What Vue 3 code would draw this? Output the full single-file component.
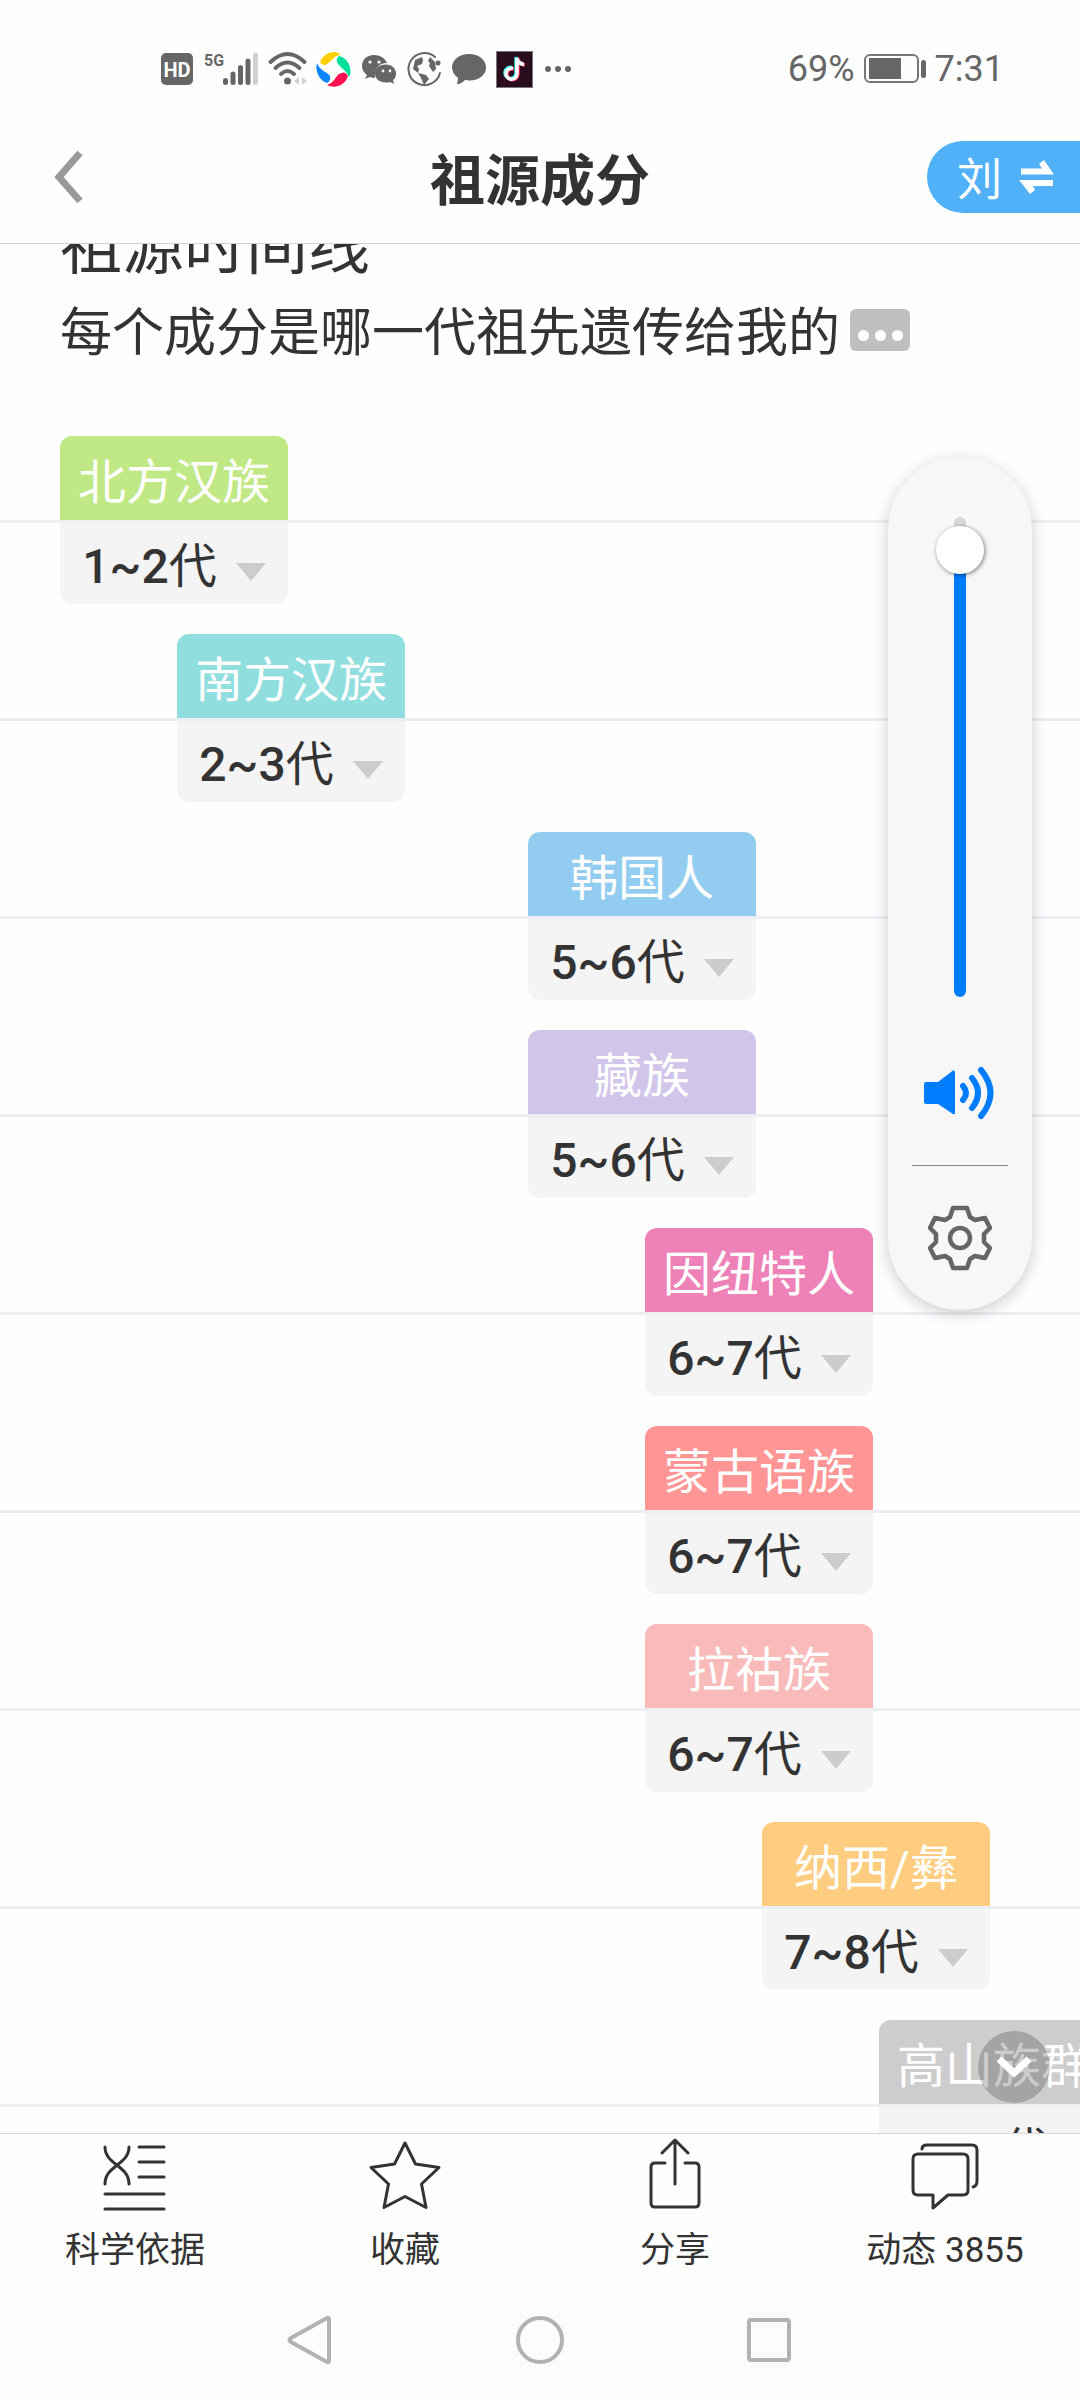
<script setup>
import { ref } from 'vue'

const volume = ref(98)
const surname = ref('刘')

const STEP = 117
const timeline = [
  { name: '北方汉族', range: '1~2', slot: 0, color: '#c0e885' },
  { name: '南方汉族', range: '2~3', slot: 1, color: '#90dede' },
  { name: '韩国人', range: '5~6', slot: 4, color: '#92cdf1' },
  { name: '藏族', range: '5~6', slot: 4, color: '#d1c5ea' },
  { name: '因纽特人', range: '6~7', slot: 5, color: '#ee81b8' },
  { name: '蒙古语族', range: '6~7', slot: 5, color: '#ff9594' },
  { name: '拉祜族', range: '6~7', slot: 5, color: '#f9bbba' },
  { name: '纳西/彝', range: '7~8', slot: 6, color: '#ffcd80' },
  { name: '高山族群', range: '8~10', slot: 7, color: '#cdcdcd' },
]
</script>

<template>
  <div class="screen">
    <div class="status">
      <div class="status-left">
        <svg width="34" height="40" viewBox="0 0 34 40">
          <rect x="1" y="4" width="32" height="32" rx="5" fill="#666" />
          <text x="17" y="28" text-anchor="middle" font-size="20" font-weight="700" fill="#fff">HD</text>
        </svg>
        <svg width="56" height="40" viewBox="0 0 56 40">
          <text x="1" y="17" font-size="16" font-weight="700" fill="#666">5G</text>
          <g stroke="#666" stroke-width="5" stroke-linecap="round">
            <path d="M22.500 31.500V33.500M30 25V33.500M37.500 18.500V33.500M45 12V33.500" />
            <path d="M52.500 6V33.500" stroke="#d0d0d0" />
          </g>
        </svg>
        <svg width="39" height="40" viewBox="0 0 39 40">
          <g fill="none" stroke="#666" stroke-width="4" stroke-linecap="round">
            <path d="M2.500 13Q19.500-3 36.500 13M7.500 19Q19.500 8 31.500 19M13 25Q19.500 19 26 25" />
          </g>
          <circle cx="19.500" cy="32" r="3.500" fill="#666" />
          <path d="M31 28v8l-5-4zM34 28v8l5-4z" fill="#d0d0d0" />
        </svg>
        <svg width="36" height="40" viewBox="0 0 36 40">
          <path d="M4 13C8 3 20 0 25 6C18 6 16 12 11 15Q7 18 4 13Z" fill="#ffd100" />
          <path d="M23 7C33 9 37 22 33 28C31 22 26 20 22 15Q19 10 23 7Z" fill="#00e09b" />
          <path d="M1 14C4 22 10 22 14 27Q15 32 11 34C2 31-1 20 1 14Z" fill="#0a84ff" />
          <path d="M11 36C18 34 19 28 23 25Q29 21 32 27C29 37 18 40 11 36Z" fill="#ff0f50" />
        </svg>
        <svg width="36" height="40" viewBox="0 0 36 40">
          <path d="M13 6C5 6 1 11 1 17c0 4 2 7 5 9l-2 4 5-2q3 1 5 1C13 20 18 14 26 14 24 9 19 6 13 6Z" fill="#666" />
          <path d="M25 15.500c-7 0-11 4-11 9s4 9 11 9q2 0 4-.5l4 2-1-4c2-1 3-4 3-6.500 0-5-4-9-10-9Z" fill="#666" />
          <g fill="#fff"><circle cx="9" cy="13" r="1.600" /><circle cx="18" cy="13" r="1.600" /><circle cx="22" cy="22" r="1.400" /><circle cx="29" cy="22" r="1.400" /></g>
        </svg>
        <svg width="36" height="40" viewBox="0 0 36 40">
          <path d="M29 8A16 16 0 1 0 34 24" fill="none" stroke="#666" stroke-width="2" stroke-linecap="round" />
          <circle cx="32" cy="14" r="2.500" fill="#666" />
          <path d="M16 8 9 11 7 20l5 4 1-4-2-3 5-2 1-4zM12 24l8 2 3 4-5 6-3-7zM24 8l5 5 1 7-3 3-4-6 1-3-2-2z" fill="#666" />
        </svg>
        <svg width="36" height="40" viewBox="0 0 36 40">
          <path d="M18 5C8 5 1 11 1 18.500c0 4 2 7 6 10.500 0 3-1 5-1 6 4 0 6-2 8-4 12 2 21-4 21-12.500C35 11 28 5 18 5Z" fill="#666" />
        </svg>
        <svg width="37" height="40" viewBox="0 0 37 40">
          <rect x=".5" y="2.500" width="36" height="36" fill="#2a0d1c" stroke="#777" />
          <g fill="none" stroke-width="3.500">
            <path d="M16 18.500a5.500 5.500 0 1 0 4 5.500V8q1 6 7 6.500" stroke="#25f4ee" />
            <path d="M18 20a5.500 5.500 0 1 0 4 5.500V9.500q1 6 7 6.500" stroke="#fe2c55" />
            <path d="M17 19.500a5.500 5.500 0 1 0 4 5.500V9q1 6 7 6.500" stroke="#fff" />
          </g>
        </svg>
        <svg width="30" height="40" viewBox="0 0 30 40" fill="#666">
          <circle cx="6" cy="20" r="3" /><circle cx="16" cy="20" r="3" /><circle cx="26" cy="20" r="3" />
        </svg>
      </div>
      <div class="status-right">
        <span>69%</span>
        <svg width="62" height="40" viewBox="0 0 62 40">
          <rect x="1" y="6" width="53" height="27" rx="5" fill="none" stroke="#777" stroke-width="2" />
          <rect x="5" y="9" width="32" height="21" fill="#666" />
          <rect x="57" y="11" width="5" height="18" rx="2.500" fill="#666" />
        </svg>
        <span>7:31</span>
      </div>
    </div>

    <header class="header">
      <button class="back" aria-label="返回">
        <svg width="36" height="56" viewBox="0 0 36 56">
          <path d="M32 4 11 28 32 52" fill="none" stroke="#999" stroke-width="7" />
        </svg>
      </button>
      <h1>祖源成分</h1>
      <button class="switch">
        <span>{{ surname }}</span>
        <svg width="36" height="36" viewBox="0 0 36 36" fill="#fff">
          <path d="M2 9.500H23L20 5 25 1 35 15.500H2Z" />
          <path d="M34 27H14L16 31 11 35 0 21H34Z" />
        </svg>
      </button>
    </header>

    <main class="content">
      <section class="intro">
        <h2>祖源时间线</h2>
        <p>
          <span>每个成分是哪一代祖先遗传给我的</span>
          <button class="more" aria-label="更多"><i></i><i></i><i></i></button>
        </p>
      </section>

      <ul class="timeline">
        <li v-for="item in timeline" :key="item.name">
          <div class="lane top">
            <div class="name" :style="{ marginLeft: item.slot * STEP + 'px', background: item.color }">{{ item.name }}</div>
          </div>
          <div class="lane">
            <button class="range" :style="{ marginLeft: item.slot * STEP + 'px' }">
              <span><b>{{ item.range }}</b>代</span>
              <svg width="30" height="18" viewBox="0 0 30 18"><path d="M0 0H30L15 18Z" fill="#ccc" /></svg>
            </button>
          </div>
        </li>
      </ul>

      <button class="down" aria-label="向下">
        <svg width="36" height="24" viewBox="0 0 36 24">
          <path d="M3 4 18 18 33 4" fill="none" stroke="#fff" stroke-width="7" />
        </svg>
      </button>
    </main>

    <nav class="tabs">
      <a href="#science">
        <svg width="72" height="72" viewBox="0 0 72 72">
          <path d="M6 6C6 24 30 24 30 43M30 6C30 24 6 24 6 43M40 6H65M40 21H65M40 36H65M6 53H65M6 68H65" />
        </svg>
        <span>科学依据</span>
      </a>
      <a href="#favorite">
        <svg width="72" height="72" viewBox="0 0 72 72">
          <path d="M36 2 46.500 23 70 26.500 52.500 43 57 66.500 36 55.500 15 66.500 19.500 43 2 26.500 25.500 23Z" />
        </svg>
        <span>收藏</span>
      </a>
      <a href="#share">
        <svg width="72" height="72" viewBox="0 0 72 72">
          <path d="M26 22H16Q12 22 12 26V62Q12 66 16 66H56Q60 66 60 62V26Q60 22 56 22H46M36 43V0M23 12 36-1 49 12" />
        </svg>
        <span>分享</span>
      </a>
      <a href="#feed">
        <svg width="72" height="72" viewBox="0 0 72 72">
          <path d="M9 13H54Q59 13 59 18V49Q59 54 54 54H39L24 67V54H9Q4 54 4 49V18Q4 13 9 13ZM13 8Q13 4 18 4H63Q68 4 68 9V40Q68 45 64 46" />
        </svg>
        <span>动态 3855</span>
      </a>
    </nav>

    <div class="system">
      <button aria-label="后退">
        <svg width="50" height="50" viewBox="0 0 50 50"><path d="M42 3Q44 2 44 5V45Q44 48 42 47L6 27Q3 25 6 23Z" /></svg>
      </button>
      <button aria-label="主页">
        <svg width="50" height="50" viewBox="0 0 50 50"><circle cx="25" cy="25" r="22" /></svg>
      </button>
      <button aria-label="最近任务">
        <svg width="50" height="50" viewBox="0 0 50 50"><rect x="4" y="5" width="40" height="40" rx="2" /></svg>
      </button>
    </div>

    <aside class="volume">
      <input v-model="volume" type="range" min="0" max="100" aria-label="音量" />
      <svg class="speaker" width="72" height="56" viewBox="0 0 72 56">
        <path d="M2 17H14L29 5.500Q31 5 31 7V48Q31 50 29 49L14 39H2Q0 39 0 37V19Q0 17 2 17Z" fill="#007dff" />
        <g fill="none" stroke="#007dff" stroke-width="6" stroke-linecap="round">
          <path d="M39 21Q45 28 39 35M48 13Q60 28 48 43M57 5Q76 28 57 51" />
        </g>
      </svg>
      <hr />
      <button class="gear" aria-label="设置">
        <svg width="66" height="68" viewBox="0 0 66 68" fill="none" stroke="#666" stroke-width="4.500" stroke-linejoin="round">
          <path d="M26 4H40L43 13 48 16 58 14 63 24 57 30V38L63 44 58 54 48 52 43 55 40 64H26L23 55 18 52 8 54 3 44 9 38V30L3 24 8 14 18 16 23 13Z" />
          <circle cx="33" cy="34" r="10" />
        </svg>
      </button>
    </aside>
  </div>
</template>

<style>
body {
  background: #fefefe;
}
</style>

<style scoped>
* {
  box-sizing: border-box;
}
.screen {
  position: relative;
  display: flex;
  flex-direction: column;
  height: 100vh;
  overflow: hidden;
  background: #fefefe;
  color: #333;
  font-family: Roboto, 'Noto Sans CJK SC', sans-serif;
}
button {
  margin: 0;
  padding: 0;
  border: 0;
  background: none;
  color: inherit;
  font: inherit;
}
svg {
  display: block;
  flex: none;
  overflow: visible;
}
.status {
  display: flex;
  justify-content: space-between;
  height: 110px;
  padding: 28px 76px 0 160px;
  color: #666;
  font-size: 36px;
}
.status-left,
.status-right {
  display: flex;
  align-items: center;
  gap: 9px;
}
.header {
  display: grid;
  grid-template-columns: 1fr auto 1fr;
  align-items: center;
  height: 134px;
  flex: none;
  border-bottom: 1px solid #d4d4d4;
}
.back {
  justify-self: start;
  padding-left: 48px;
}
h1 {
  margin: 0;
  padding-top: 8px;
  font-size: 55px;
  font-weight: 700;
  line-height: 72px;
}
.switch {
  display: flex;
  align-items: center;
  justify-self: end;
  gap: 17px;
  height: 72px;
  padding: 0 25px 0 30px;
  border-radius: 36px 0 0 36px;
  background: #50b0f8;
  color: #fff;
  font-size: 45px;
}
.content {
  position: relative;
  flex: 1;
  min-height: 0;
  overflow: hidden;
}
.intro {
  margin-top: -32px;
  padding: 0 60px 66px;
}
.intro h2 {
  margin: 0 0 14px;
  font-size: 62px;
  font-weight: 400;
  line-height: 72px;
}
.intro p {
  display: flex;
  align-items: center;
  gap: 10px;
  margin: 0;
  font-size: 52px;
  line-height: 72px;
}
.more {
  display: flex;
  justify-content: center;
  gap: 6px;
  width: 60px;
  height: 42px;
  margin-bottom: 8px;
  padding-top: 21px;
  border-radius: 6px;
  background: #bfbfbf;
}
.more i {
  width: 11px;
  height: 11px;
  border-radius: 50%;
  background: #fff;
}
.timeline {
  margin: 0;
  padding: 0;
  list-style: none;
}
.timeline li {
  margin-bottom: 30px;
}
.lane {
  display: flex;
  padding-left: 60px;
}
.lane.top {
  border-bottom: 3px solid #ebeff3;
}
.name {
  flex: none;
  width: 228px;
  height: 84px;
  padding-top: 8px;
  border-radius: 12px 12px 0 0;
  color: #fff;
  font-size: 48px;
  line-height: 78px;
  text-align: center;
}
.range {
  display: flex;
  flex: none;
  align-items: center;
  justify-content: center;
  gap: 19px;
  width: 228px;
  height: 81px;
  padding-top: 7px;
  border-radius: 0 0 12px 12px;
  background: #f4f4f4;
  font-size: 48px;
  line-height: 74px;
}
.range b {
  font-weight: 500;
}
.range svg {
  margin-top: 10px;
}
.down {
  position: absolute;
  right: 30px;
  bottom: 30px;
  display: flex;
  align-items: center;
  justify-content: center;
  width: 72px;
  height: 72px;
  border-radius: 50%;
  background: rgba(0, 0, 0, 0.2);
}
.tabs {
  display: grid;
  grid-template-columns: repeat(4, 1fr);
  flex: none;
  height: 147px;
  border-top: 1px solid #dcdcdc;
}
.tabs a {
  display: flex;
  flex-direction: column;
  align-items: center;
  padding-top: 7px;
  color: inherit;
  font-size: 35px;
  line-height: 76px;
  text-decoration: none;
}
.tabs svg {
  fill: none;
  stroke: #333;
  stroke-width: 3;
  stroke-linecap: round;
  stroke-linejoin: round;
}
.system {
  display: flex;
  flex: none;
  justify-content: center;
  gap: 180px;
  height: 120px;
  background: #fcfcfc;
}
.system svg {
  fill: none;
  stroke: #b2b2b2;
  stroke-width: 4;
}
.volume {
  position: absolute;
  top: 457px;
  right: 48px;
  display: flex;
  flex-direction: column;
  align-items: center;
  width: 144px;
  padding: 60px 0 38px;
  border-radius: 72px;
  background: #f7f7f7;
  box-shadow: 0 4px 16px rgba(0, 0, 0, 0.2);
}
.volume input {
  width: 48px;
  height: 480px;
  margin: 0;
  appearance: none;
  background: none;
  writing-mode: vertical-lr;
  direction: rtl;
}
.volume input::-webkit-slider-runnable-track {
  width: 12px;
  height: 480px;
  border-radius: 6px;
  background: linear-gradient(#d8d8d8 32px, #007dff 32px);
}
.volume input::-webkit-slider-thumb {
  width: 48px;
  height: 48px;
  margin-left: -18px;
  appearance: none;
  border-radius: 50%;
  background: #fff;
  box-shadow: 1px 1px 4px rgba(0, 0, 0, 0.5);
}
.speaker {
  margin-top: 68px;
}
.volume hr {
  width: 96px;
  height: 1px;
  margin: 44px 0 38px;
  border: 0;
  background: #888;
}
</style>
